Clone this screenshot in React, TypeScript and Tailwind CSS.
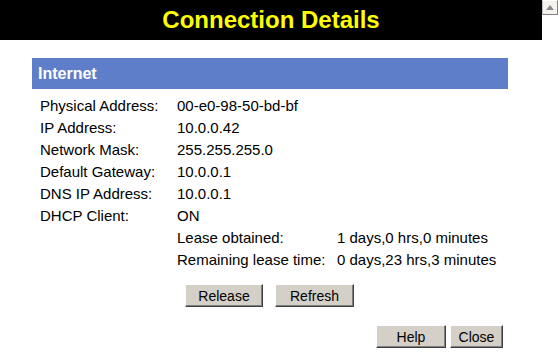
import React from 'react';

const rows: [string, string][] = [
  ['Physical Address:', '00-e0-98-50-bd-bf'],
  ['IP Address:', '10.0.0.42'],
  ['Network Mask:', '255.255.255.0'],
  ['Default Gateway:', '10.0.0.1'],
  ['DNS IP Address:', '10.0.0.1'],
  ['DHCP Client:', 'ON'],
];

const lease: [string, string][] = [
  ['Lease obtained:', '1 days,0 hrs,0 minutes'],
  ['Remaining lease time:', '0 days,23 hrs,3 minutes'],
];

function Button({ label, width }: { label: string; width: string }) {
  return (
    <button
      className={`${width} h-[23px] bg-[#d4d0c8] text-[14px] text-black leading-none border border-t-white border-l-white border-r-[#404040] border-b-[#404040] shadow-[inset_-1px_-1px_0_#808080]`}
    >
      {label}
    </button>
  );
}

export default function App() {
  return (
    <div className="flex w-[558px] h-[361px] bg-white overflow-hidden font-['Liberation_Sans',Arial,sans-serif]">
      <div className="w-[542px] flex-shrink-0">
        <div className="h-[40px] bg-black flex items-center justify-center">
          <h1 className="text-[24px] font-bold text-[#ffff00] leading-none">Connection Details</h1>
        </div>

        <div className="pt-[18px] pl-[32px] pr-[34px]">
          <div className="h-[31px] bg-[#5f7ec9] flex items-center pl-[6px]">
            <span className="text-[16px] font-bold text-white">Internet</span>
          </div>

          <div className="pt-[6px] pl-[8px] text-[15px] text-black leading-[22px]">
            {rows.map(([label, value]) => (
              <div key={label} className="flex">
                <span className="w-[137px]">{label}</span>
                <span>{value}</span>
              </div>
            ))}
            {lease.map(([label, value]) => (
              <div key={label} className="flex pl-[137px]">
                <span className="w-[160px]">{label}</span>
                <span>{value}</span>
              </div>
            ))}
          </div>

          <div className="flex gap-[12px] pl-[153px] mt-[13px]">
            <Button label="Release" width="w-[78px]" />
            <Button label="Refresh" width="w-[79px]" />
          </div>

          <div className="flex justify-end gap-[4px] pr-[5px] mt-[18px]">
            <Button label="Help" width="w-[70px]" />
            <Button label="Close" width="w-[53px]" />
          </div>
        </div>
      </div>

      <div className="w-[16px] flex-shrink-0">
        <div className="h-[15px] bg-[#f4f3ee] border border-l-[#c0c0c0] border-t-white border-r-[#808080] border-b-[#808080] flex items-center justify-center">
          <svg width="8" height="5" viewBox="0 0 8 5">
            <path d="M4 0 L8 5 L0 5 Z" fill="#8a8a8a" />
          </svg>
        </div>
      </div>
    </div>
  );
}
